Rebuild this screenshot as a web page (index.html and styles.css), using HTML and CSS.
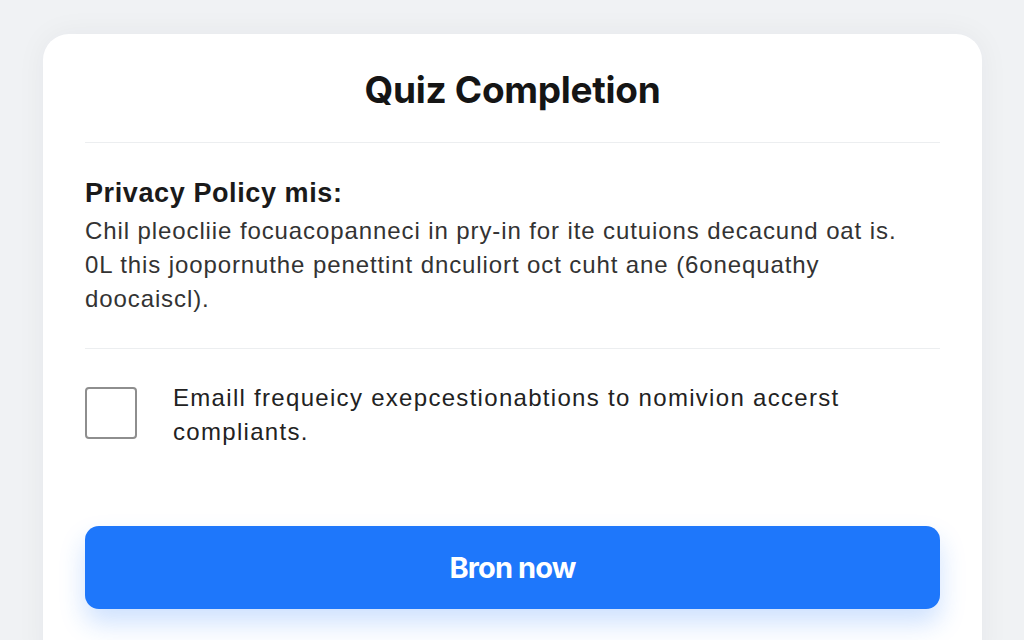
FILE: index.html
```html
<!DOCTYPE html>
<html lang="en">
<head>
<meta charset="utf-8">
<title>Quiz Completion</title>
<link rel="stylesheet" href="styles.css">
</head>
<body>
<main class="card">
  <h1 class="card-title">Quiz Completion</h1>
  <hr class="divider">
  <section class="policy">
    <h2 class="policy-heading">Privacy Policy mis:</h2>
    <p class="policy-text">Chil pleocliie focuacopanneci in pry-in for ite cutuions decacund oat is. 0L this joopornuthe penettint dnculiort oct cuht ane (6onequathy doocaiscl).</p>
  </section>
  <hr class="divider">
  <label class="consent">
    <span class="checkbox"></span>
    <span class="consent-text">Emaill frequeicy exepcestionabtions to nomivion accerst compliants.</span>
  </label>
  <button class="primary-btn" type="button">Bron now</button>
</main>
</body>
</html>
```

FILE: styles.css
```css
* { box-sizing: border-box; }

html, body {
  margin: 0;
  height: 100%;
}

body {
  background: #f0f2f4;
  font-family: "Liberation Sans", Arial, sans-serif;
  color: #222;
  overflow: hidden;
  padding: 34px 42px 0 43px;
}

.card {
  background: #ffffff;
  border-radius: 26px;
  box-shadow: 0 0 30px rgba(20, 30, 50, 0.05);
  padding: 0 42px 40px;
  min-height: 640px;
  display: flex;
  flex-direction: column;
}

.card-title {
  margin: 0;
  padding: 37px 0 33px;
  text-align: center;
  font-family: Inter, "Liberation Sans", sans-serif;
  font-weight: 700;
  font-size: 37px;
  line-height: 38px;
  color: #151515;
  letter-spacing: -0.3px;
}

.divider {
  border: 0;
  height: 1px;
  background: #eceef0;
  margin: 0;
}

.policy {
  padding: 33px 0 32px;
}

.policy-heading {
  margin: 0 0 4px;
  font-family: "Liberation Sans", Arial, sans-serif;
  font-weight: 700;
  font-size: 27px;
  line-height: 34px;
  letter-spacing: 0.6px;
  color: #1a1a1a;
}

.policy-text {
  margin: 0;
  font-size: 24px;
  line-height: 34px;
  letter-spacing: 0.9px;
  color: #333;
  max-width: 830px;
}

.consent {
  display: flex;
  align-items: flex-start;
  gap: 36px;
  padding: 38px 0 0;
}

.checkbox {
  flex: none;
  width: 52px;
  height: 52px;
  border: 2.5px solid #8e8e8e;
  border-radius: 4px;
}

.consent-text {
  font-size: 24px;
  line-height: 34px;
  letter-spacing: 1.3px;
  color: #222;
  max-width: 700px;
  margin-top: -6px;
}

.primary-btn {
  margin-top: 77px;
  height: 83px;
  width: 100%;
  border: 0;
  border-radius: 14px;
  background: #1e77fb;
  color: #fff;
  font-family: Inter, "Liberation Sans", sans-serif;
  font-weight: 700;
  font-size: 29px;
  letter-spacing: -0.9px;
  box-shadow: 0 14px 26px rgba(30, 119, 251, 0.22);
  cursor: pointer;
}
```
